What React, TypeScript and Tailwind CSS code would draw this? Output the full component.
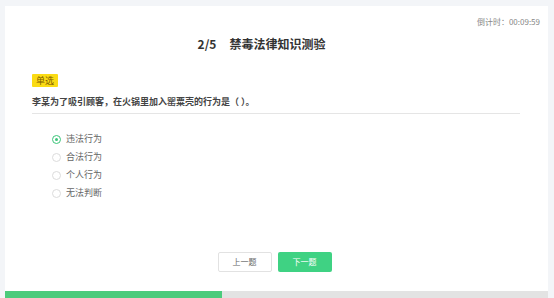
import React, { useState } from 'react';

const options = ['违法行为', '合法行为', '个人行为', '无法判断'];

const App = () => {
  const [selected, setSelected] = useState(0);

  return (
    <div
      className="w-[554px] h-[298px] bg-[#f3f5f8] pt-[6px] pl-[5px] pr-[6px] overflow-hidden"
      style={{ fontFamily: '"Noto Sans CJK SC", "Noto Sans", sans-serif' }}
    >
      <div className="bg-white h-[292px] flex flex-col">
        {/* timer */}
        <div className="flex justify-end pr-[8px] pt-[11px] h-[24px] text-[8px] leading-[10px] text-[#888]">
          倒计时：00:09:59
        </div>

        {/* title */}
        <div className="flex justify-center items-center h-[28px] pr-[30px] text-[12px] font-bold text-[#333]">
          <span>2/5</span>
          <span className="ml-[13px]">禁毒法律知识测验</span>
        </div>

        {/* question */}
        <div className="pl-[27px] pr-[28px] mt-[7px]">
          <span className="inline-block bg-[#fadb14] text-[#7a5a00] text-[9px] leading-[13px] px-[4px] rounded-[1px]">
            单选
          </span>
          <div className="mt-[6px] pb-[4px] text-[9px] leading-[14px] font-bold text-[#444] border-b border-[#e5e5e5]">
            李某为了吸引顾客，在火锅里加入罂粟壳的行为是（ ）。
          </div>
        </div>

        {/* options */}
        <div className="pl-[47px] mt-[18px] flex flex-col gap-[4px]">
          {options.map((opt, i) => (
            <div
              key={opt}
              className="flex items-center h-[14px] cursor-pointer"
              onClick={() => setSelected(i)}
            >
              <span
                className={`w-[9px] h-[9px] rounded-full border flex items-center justify-center ${
                  selected === i ? 'border-[#3cc57a]' : 'border-[#dcdcdc]'
                }`}
              >
                {selected === i && <span className="w-[3px] h-[3px] rounded-full bg-[#3cc57a]" />}
              </span>
              <span className="ml-[5px] text-[9px] text-[#666]">{opt}</span>
            </div>
          ))}
        </div>

        {/* buttons */}
        <div className="flex justify-center gap-[6px] mt-auto mb-[19px] pr-[4px]">
          <button className="w-[54px] h-[20px] border border-[#e2e2e2] rounded-[2px] bg-white text-[8px] text-[#666]">
            上一题
          </button>
          <button className="w-[54px] h-[20px] rounded-[2px] bg-[#3fd283] text-[8px] text-white">
            下一题
          </button>
        </div>

        {/* progress */}
        <div className="h-[7px] bg-[#e3e3e3] flex">
          <div className="h-full bg-[#4ccb7c]" style={{ width: '40%' }} />
        </div>
      </div>
    </div>
  );
};

export default App;
